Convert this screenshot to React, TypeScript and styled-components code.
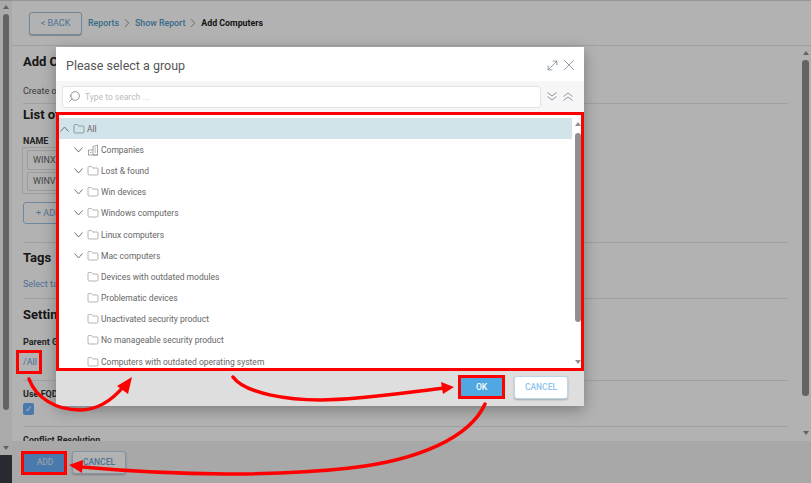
import * as React from 'react';
import styled, { createGlobalStyle } from 'styled-components';
import {
  ChevronDown,
  Folder,
  MoveDiagonal,
  Search,
  X,
} from 'lucide-react';

const GlobalStyle = createGlobalStyle`
  html, body {
    margin: 0;
    padding: 0;
    background: #fff;
    font-family: Roboto, "Noto Sans", sans-serif;
  }
  * { box-sizing: border-box; }
`;

const Page = styled.div`
  position: relative;
  display: flex;
  width: 811px;
  height: 483px;
  overflow: hidden;
  background: #fff;
`;

const Rail = styled.div`
  display: flex;
  flex-direction: column;
  align-items: center;
  flex: 0 0 12px;
  background: #f4f4f4;
`;
const RailThumb = styled.div`
  flex: 0 0 396px;
  width: 6px;
  margin: 5px 0 36px;
  border-radius: 3px;
  background: #8f8f8f;
`;
const RailFoot = styled.div`
  flex: 1;
  width: 100%;
  margin-top: 5px;
  background: #3a3d45;
`;
const Arrow = styled.div<{ $dir: 'up' | 'down' }>`
  flex: none;
  width: 0;
  height: 0;
  border-left: 3px solid transparent;
  border-right: 3px solid transparent;
  ${p => (p.$dir === 'up' ? 'border-bottom: 4px solid #8f8f8f;' : 'border-top: 4px solid #8f8f8f;')}
`;
const RailTopArrow = styled(Arrow)`
  margin-top: 5px;
`;

const Main = styled.div`
  display: flex;
  flex-direction: column;
  flex: 1;
  min-width: 0;
`;

const Header = styled.header`
  display: flex;
  align-items: center;
  flex: 0 0 46px;
  padding: 1px 0 0 17px;
  border-bottom: 1px solid #e6e6e6;
`;
const BackButton = styled.div`
  display: flex;
  align-items: center;
  justify-content: center;
  width: 53px;
  height: 23px;
  margin-right: 6px;
  color: #6fa8d6;
  font-size: 9px;
  background: #fff;
  border: 1px solid #9cc3e4;
  border-radius: 3px;
  box-shadow: 0 1px 1px rgba(0, 0, 0, 0.25);
`;
const Crumb = styled.span<{ $current?: boolean }>`
  color: ${p => (p.$current ? '#222' : '#4f9ac4')};
  font-weight: ${p => (p.$current ? 700 : 500)};
  font-size: 8.8px;
`;
const CrumbSep = styled(ChevronDown)`
  width: 14px;
  height: 14px;
  margin: 0 1px;
  color: #666;
  stroke-width: 1.2;
  transform: rotate(-90deg);
`;

const Body = styled.div`
  display: flex;
  flex: 0 0 395px;
  min-height: 0;
`;
const Content = styled.div`
  flex: 1;
  min-width: 0;
  padding: 0 12px 0 11px;
  overflow: hidden;
`;
const Section = styled.section<{ $height: number }>`
  display: flow-root;
  height: ${p => p.$height}px;
  border-bottom: 1px solid #e6e6e6;
`;
const SectionTitle = styled.h2<{ $top: number }>`
  margin: ${p => p.$top}px 0 0;
  color: #222;
  font-size: 13px;
  font-weight: 700;
  line-height: 18px;
`;
const Description = styled.p`
  margin: 13px 0 0;
  color: #555;
  font-size: 9px;
  line-height: 14px;
`;
const FieldLabel = styled.div<{ $top: number }>`
  margin-top: ${p => p.$top}px;
  color: #333;
  font-size: 9px;
  font-weight: 700;
  line-height: 12px;
`;
const LinkText = styled.div<{ $top: number }>`
  margin-top: ${p => p.$top}px;
  color: #6f9fd8;
  font-size: 9px;
  line-height: 14px;
`;
const NameTable = styled.div`
  display: flex;
  flex-direction: column;
  gap: 2px;
  width: 200px;
  height: 47px;
  margin-left: -1px;
  padding: 2px 4px;
  border: 1px solid #e4e4e4;
`;
const NameInput = styled.div`
  display: flex;
  align-items: center;
  height: 20px;
  padding-left: 5px;
  color: #666;
  font-size: 9px;
  border: 1px solid #e0e0e0;
  border-radius: 2px;
`;
const AddRowButton = styled.div`
  display: flex;
  align-items: center;
  width: 90px;
  height: 22px;
  margin-top: 8px;
  padding-left: 12px;
  color: #7aa6dc;
  font-size: 9px;
  border: 1px solid #9cc3e4;
  border-radius: 3px;
`;
const Checkbox = styled.div`
  display: flex;
  align-items: center;
  justify-content: center;
  width: 11px;
  height: 12px;
  margin-top: 3px;
  color: #fff;
  font-size: 9px;
  background: #6aaef8;
  border-radius: 2px;
`;

const ScrollBar = styled.div`
  display: flex;
  flex-direction: column;
  align-items: center;
  flex: 0 0 11px;
  padding-top: 5px;
`;
const ScrollThumb = styled.div`
  flex: 0 0 336px;
  width: 7px;
  margin: 5px 0 35px;
  border-radius: 3px;
  background: #8f8f8f;
`;

const Footer = styled.footer`
  display: flex;
  align-items: center;
  gap: 5px;
  flex: 1;
  padding: 0 0 0 11px;
  background: #f1f1f1;
`;
const PrimaryButton = styled.div<{ $width: number; $height: number }>`
  display: flex;
  align-items: center;
  justify-content: center;
  width: ${p => p.$width}px;
  height: ${p => p.$height}px;
  color: #fff;
  font-size: 8.5px;
  font-weight: 500;
  background: #4fa8e2;
`;
const FooterAdd = styled(PrimaryButton)`
  background: #6aaef8;
  color: #cfe2f7;
`;
const OutlineButton = styled.div<{ $width: number; $height: number }>`
  display: flex;
  align-items: center;
  justify-content: center;
  width: ${p => p.$width}px;
  height: ${p => p.$height}px;
  color: #8cc4ec;
  font-size: 8.5px;
  font-weight: 500;
  background: #fff;
  border: 1px solid #b9d7ea;
  border-radius: 3px;
  box-shadow: 0 1px 2px rgba(0, 0, 0, 0.25);
`;
const FooterCancel = styled(OutlineButton)`
  color: #6fa8d6;
`;

const Backdrop = styled.div`
  position: absolute;
  inset: 0;
  background: rgba(0, 0, 0, 0.3);
  border-top: 1px solid rgba(0, 0, 0, 0.15);
`;

const Modal = styled.div`
  position: absolute;
  left: 56px;
  top: 47px;
  display: flex;
  flex-direction: column;
  width: 528px;
  height: 359px;
  background: #fff;
  box-shadow: 0 4px 14px rgba(0, 0, 0, 0.3);
`;
const ModalHead = styled.div`
  display: flex;
  align-items: center;
  flex: 0 0 34px;
  padding: 2px 6px 0 10px;
`;
const ModalTitle = styled.h1`
  flex: 1;
  margin: 0;
  color: #555;
  font-size: 12.5px;
  font-weight: 400;
`;
const HeadIcons = styled.div`
  display: flex;
  align-items: center;
  color: #6f7c8c;
`;
const SearchBand = styled.div`
  display: flex;
  align-items: center;
  flex: 0 0 31px;
  padding: 0 11px 0 6px;
  background: #f6f6f6;
`;
const SearchBox = styled.div`
  display: flex;
  align-items: center;
  gap: 4px;
  flex: 1;
  height: 22px;
  margin-right: 6px;
  padding-left: 5px;
  background: #fff;
  border: 1px solid #e4e4e4;
  border-radius: 3px;
  color: #667;
`;
const Placeholder = styled.span`
  color: #bdbdbd;
  font-size: 8.5px;
`;
const BandIcons = styled.div`
  display: flex;
  gap: 6px;
  color: #8a97a6;
`;
const TreeArea = styled.div`
  display: flex;
  flex: 0 0 258px;
  padding: 6px 3px 0 3px;
  overflow: hidden;
`;
const Tree = styled.ul`
  flex: 1;
  min-width: 0;
  margin: 0;
  padding: 0;
  list-style: none;
`;
const TreeRow = styled.li<{ $depth: number; $selected?: boolean }>`
  display: flex;
  align-items: center;
  height: 21.2px;
  padding-left: ${p => p.$depth * 14 + 1}px;
  color: #666;
  font-size: 8.5px;
  background: ${p => (p.$selected ? '#d3e3ea' : 'transparent')};
`;
const ChevronSlot = styled.span`
  display: flex;
  flex: 0 0 13px;
  color: #65758a;
`;
const IconSlot = styled.span<{ $selected?: boolean }>`
  display: flex;
  flex: 0 0 14px;
  color: ${p => (p.$selected ? '#65758a' : '#8d8d8d')};
`;
const TreeScroll = styled.div`
  display: flex;
  flex-direction: column;
  align-items: center;
  flex: 0 0 9px;
  padding: 4px 0 0 3px;
`;
const TreeThumb = styled.div`
  flex: 0 0 189px;
  width: 6px;
  margin: 7px 0 38px;
  border-radius: 3px;
  background: #8f8f8f;
`;
const ModalFoot = styled.div`
  display: flex;
  align-items: center;
  justify-content: flex-end;
  gap: 11px;
  flex: 1;
  padding: 0 16px 2px 0;
  background: #dedede;
`;

const Annotations = styled.svg`
  position: absolute;
  left: 0;
  top: 0;
  pointer-events: none;
`;

function Caret({ up }: { up?: boolean }) {
  return (
    <svg width="9" height="6" viewBox="0 0 9 6" fill="none" stroke="currentColor" strokeWidth="1">
      <path d={up ? 'M0.5 5.5L4.5 1L8.5 5.5' : 'M0.5 0.5L4.5 5L8.5 0.5'} />
    </svg>
  );
}

function DoubleCaret({ up }: { up?: boolean }) {
  return (
    <svg width="10" height="9" viewBox="0 0 10 9" fill="none" stroke="currentColor" strokeWidth="1">
      <path d={up ? 'M0.5 4.5L5 1L9.5 4.5M0.5 8.5L5 5L9.5 8.5' : 'M0.5 0.5L5 4L9.5 0.5M0.5 4.5L5 8L9.5 4.5'} />
    </svg>
  );
}

function CompanyIcon() {
  return (
    <svg width="12" height="12" viewBox="0 0 12 12" fill="none" stroke="#8d8d8d" strokeWidth="0.8">
      <path d="M6 11V2.5L10.5 1v10z" />
      <path d="M1.5 11V6H6" />
      <path d="M1 11h10M7.5 4h1.5M7.5 6h1.5M7.5 8h1.5M3 8.5h1.5" />
    </svg>
  );
}

type Group = { name: string; expandable: boolean; company?: boolean };

const groups: Group[] = [
  { name: 'Companies', expandable: true, company: true },
  { name: 'Lost & found', expandable: true },
  { name: 'Win devices', expandable: true },
  { name: 'Windows computers', expandable: true },
  { name: 'Linux computers', expandable: true },
  { name: 'Mac computers', expandable: true },
  { name: 'Devices with outdated modules', expandable: false },
  { name: 'Problematic devices', expandable: false },
  { name: 'Unactivated security product', expandable: false },
  { name: 'No manageable security product', expandable: false },
  { name: 'Computers with outdated operating system', expandable: false },
];

export default function App() {
  return (
    <>
      <GlobalStyle />
      <Page>
        <Rail>
          <RailTopArrow $dir="up" />
          <RailThumb />
          <Arrow $dir="down" />
          <RailFoot />
        </Rail>
        <Main>
          <Header>
            <BackButton>&lt; BACK</BackButton>
            <Crumb>Reports</Crumb>
            <CrumbSep />
            <Crumb>Show Report</Crumb>
            <CrumbSep />
            <Crumb $current>Add Computers</Crumb>
          </Header>
          <Body>
            <Content>
              <Section $height={58}>
                <SectionTitle $top={7}>Add Computers</SectionTitle>
                <Description>Create or import computers</Description>
              </Section>
              <Section $height={139}>
                <SectionTitle $top={2}>List of Computers</SectionTitle>
                <FieldLabel $top={11}>NAME</FieldLabel>
                <NameTable>
                  <NameInput>WINX</NameInput>
                  <NameInput>WINV</NameInput>
                </NameTable>
                <AddRowButton>+ ADD</AddRowButton>
              </Section>
              <Section $height={56}>
                <SectionTitle $top={6}>Tags</SectionTitle>
                <LinkText $top={10}>Select tags</LinkText>
              </Section>
              <Section $height={82}>
                <SectionTitle $top={7}>Settings</SectionTitle>
                <FieldLabel $top={12}>Parent Group</FieldLabel>
                <LinkText $top={7}>/All</LinkText>
              </Section>
              <Section $height={46}>
                <FieldLabel $top={7}>Use FQDN</FieldLabel>
                <Checkbox>✓</Checkbox>
              </Section>
              <FieldLabel $top={7}>Conflict Resolution</FieldLabel>
            </Content>
            <ScrollBar>
              <Arrow $dir="up" />
              <ScrollThumb />
              <Arrow $dir="down" />
            </ScrollBar>
          </Body>
          <Footer>
            <FooterAdd $width={44} $height={21}>ADD</FooterAdd>
            <FooterCancel $width={54} $height={23}>CANCEL</FooterCancel>
          </Footer>
        </Main>

        <Backdrop />

        <Modal>
          <ModalHead>
            <ModalTitle>Please select a group</ModalTitle>
            <HeadIcons>
              <MoveDiagonal size={15} strokeWidth={1.2} />
              <X size={18} strokeWidth={1} />
            </HeadIcons>
          </ModalHead>
          <SearchBand>
            <SearchBox>
              <Search size={13} strokeWidth={1.3} style={{ transform: 'scaleX(-1)' }} />
              <Placeholder>Type to search ...</Placeholder>
            </SearchBox>
            <BandIcons>
              <DoubleCaret />
              <DoubleCaret up />
            </BandIcons>
          </SearchBand>
          <TreeArea>
            <Tree>
              <TreeRow $depth={0} $selected>
                <ChevronSlot>
                  <Caret up />
                </ChevronSlot>
                <IconSlot $selected>
                  <Folder size={12} strokeWidth={1.3} />
                </IconSlot>
                All
              </TreeRow>
              {groups.map(group => (
                <TreeRow key={group.name} $depth={1}>
                  <ChevronSlot>
                    {group.expandable && <Caret />}
                  </ChevronSlot>
                  <IconSlot>
                    {group.company ? <CompanyIcon /> : <Folder size={12} strokeWidth={1.3} />}
                  </IconSlot>
                  {group.name}
                </TreeRow>
              ))}
            </Tree>
            <TreeScroll>
              <Arrow $dir="up" />
              <TreeThumb />
              <Arrow $dir="down" />
            </TreeScroll>
          </TreeArea>
          <ModalFoot>
            <PrimaryButton $width={43} $height={19}>OK</PrimaryButton>
            <OutlineButton $width={54} $height={23}>CANCEL</OutlineButton>
          </ModalFoot>
        </Modal>

        <Annotations width="811" height="483" viewBox="0 0 811 483" fill="none">
          <g stroke="#f00" strokeWidth="3">
            <rect x="57.5" y="113.5" width="525" height="256" />
            <rect x="17.5" y="351.5" width="23" height="21" />
            <rect x="459.5" y="376.5" width="44" height="21" />
            <rect x="22.5" y="452.5" width="43" height="21" />
          </g>
          <g stroke="#f00" strokeWidth="3.5" strokeLinecap="round">
            <path d="M29 379C36 398 56 410 80 410C100 410 114 398 124 386" />
            <path d="M233 377C245 394 290 400 320 400C360 400 410 392 445 388" />
            <path d="M485 404C470 437 420 460 350 468C280 476 180 476 82 467" />
          </g>
          <g fill="#f00">
            <path d="M132 377L117 386L128 394Z" />
            <path d="M454 387L441 382L443 394Z" />
            <path d="M69 465L83 460L82 473Z" />
          </g>
        </Annotations>
      </Page>
    </>
  );
}
